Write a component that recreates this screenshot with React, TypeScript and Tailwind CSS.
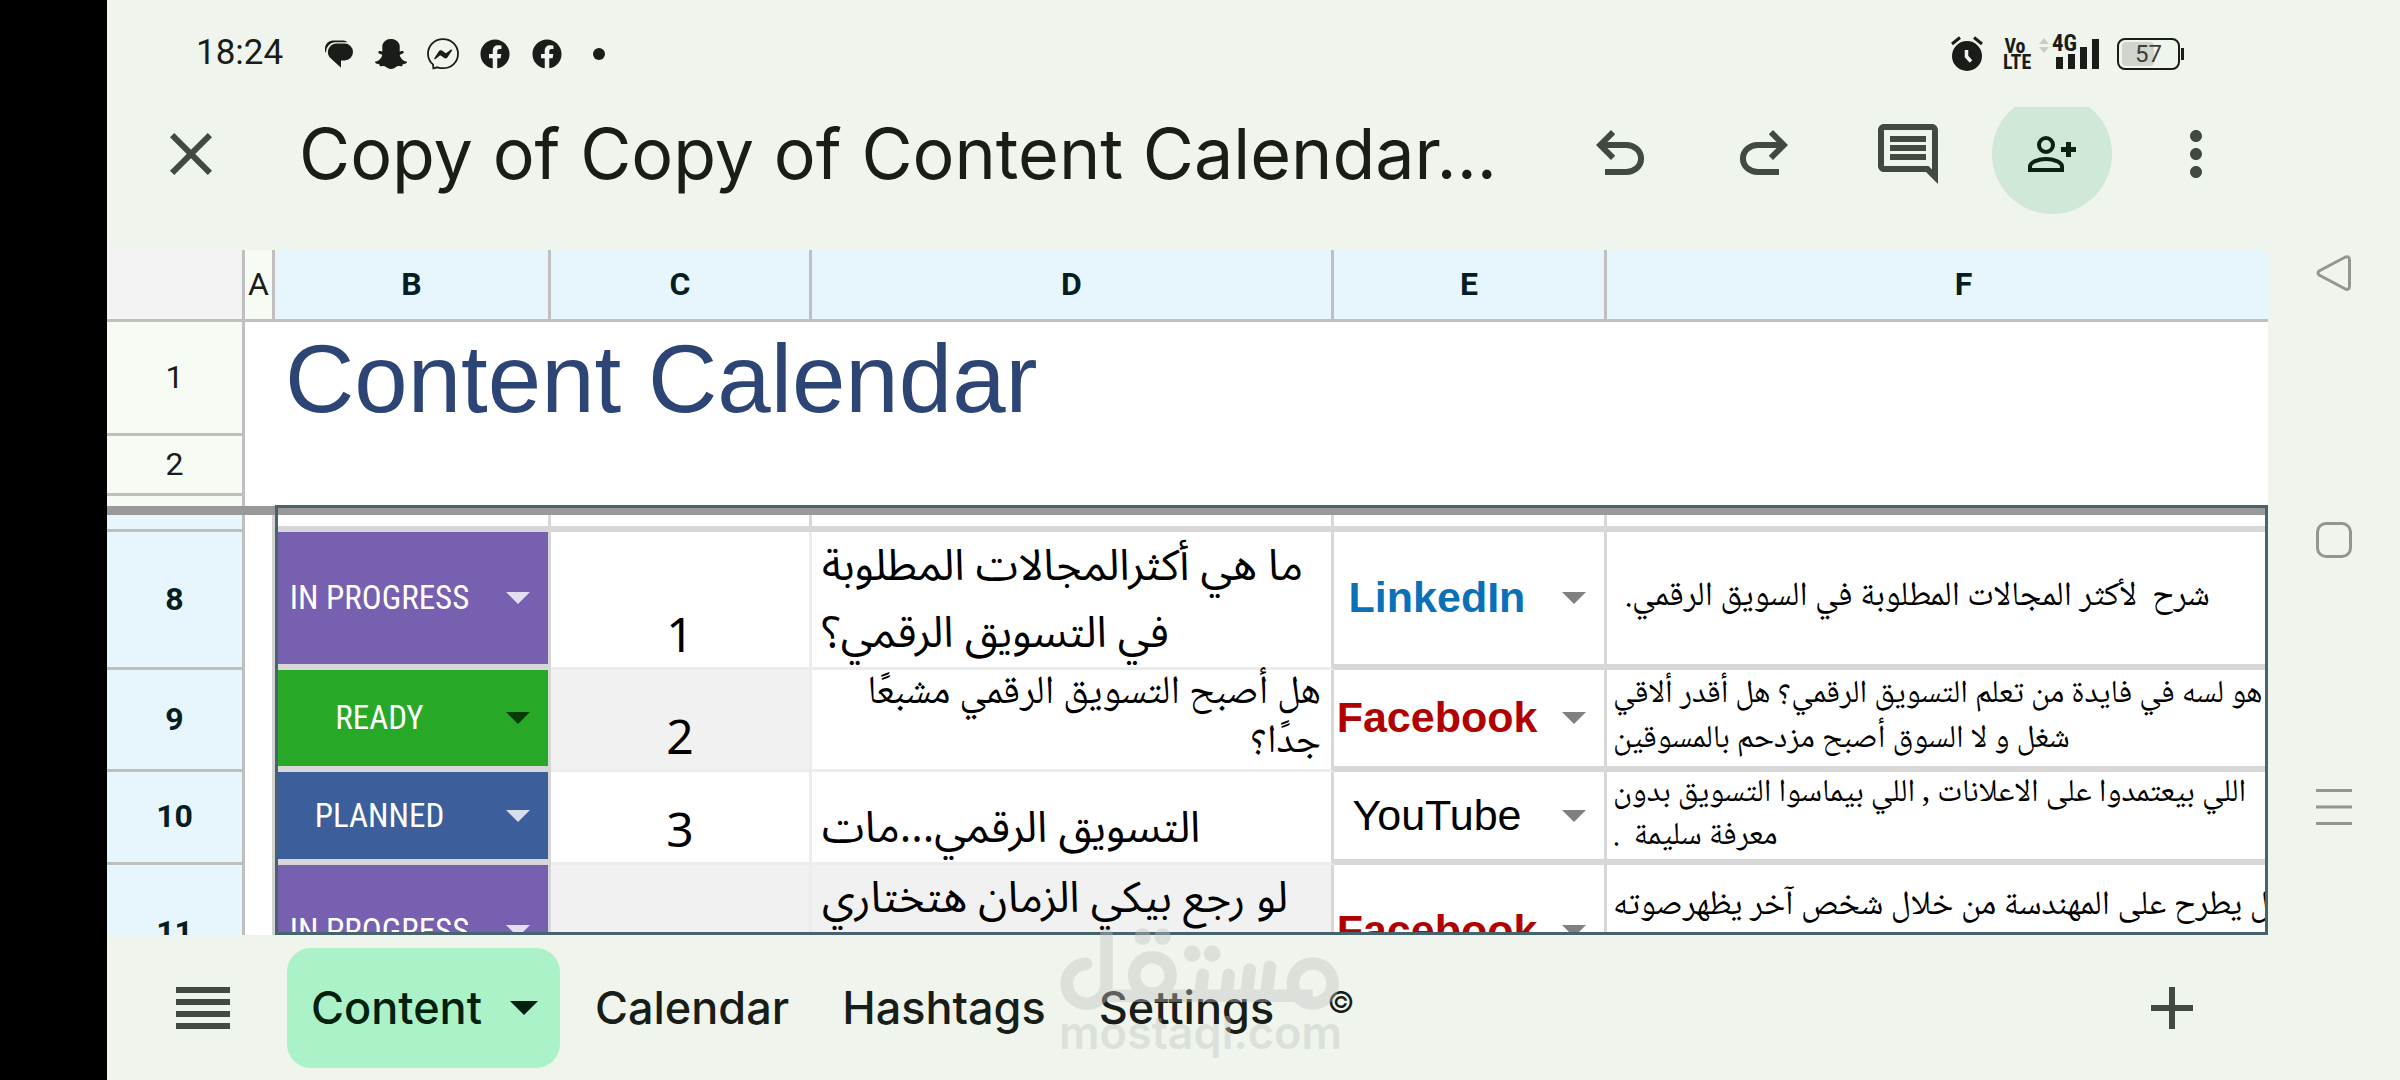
import { FaFacebook, FaSnapchatGhost } from "react-icons/fa";
import { MdClose, MdMoreVert } from "react-icons/md";

type Row = {
  n: number;
  height: string;
  status: string;
  statusBg: string;
  arrow: string;
  count: string;
  countBg: string;
  title: string[];
  titleCell: string;
  titleText: string;
  platform: string;
  platformText: string;
  notes: string[];
  notesCell: string;
};

const TITLE_SANS =
  "font-['Noto_Sans_Arabic','Noto_Sans','DejaVu_Sans',sans-serif] text-[43px] leading-[67px]";
const TITLE_NASKH =
  "font-['Noto_Naskh_Arabic','DejaVu_Sans',sans-serif] text-[40px] leading-[49px]";

const rows: Row[] = [
  {
    n: 8,
    height: "h-[138px]",
    status: "IN PROGRESS",
    statusBg: "bg-[#7860b1]",
    arrow: "text-[#e4dff0]",
    count: "1",
    countBg: "bg-white",
    title: ["ما هي أكثرالمجالات المطلوبة", "في التسويق الرقمي؟"],
    titleCell: "items-start justify-end bg-white",
    titleText: TITLE_SANS,
    platform: "LinkedIn",
    platformText: "font-bold text-[#0a70b8]",
    notes: ["شرح  لأكثر المجالات المطلوبة في السويق الرقمي."],
    notesCell: "justify-center pl-[18px] text-[34px] leading-[45px]",
  },
  {
    n: 9,
    height: "h-[102px]",
    status: "READY",
    statusBg: "bg-[#27a827]",
    arrow: "text-[#063a08]",
    count: "2",
    countBg: "bg-[#f1f1f1]",
    title: ["هل أصبح التسويق الرقمي مشبعًا", "جدًا؟"],
    titleCell: "items-end justify-start bg-white",
    titleText: TITLE_NASKH,
    platform: "Facebook",
    platformText: "font-bold text-[#b10202]",
    notes: [
      "هو لسه في فايدة من تعلم التسويق الرقمي؟ هل أقدر ألاقي",
      "شغل و لا السوق أصبح مزدحم بالمسوقين",
    ],
    notesCell: "justify-center pl-1.5 text-[32px] leading-[45px]",
  },
  {
    n: 10,
    height: "h-[93px]",
    status: "PLANNED",
    statusBg: "bg-[#3c5f9b]",
    arrow: "text-[#d8dfeb]",
    count: "3",
    countBg: "bg-white",
    title: ["التسويق الرقمي...مات"],
    titleCell: "items-start justify-end bg-white",
    titleText: TITLE_SANS,
    platform: "YouTube",
    platformText: "text-black",
    notes: [
      "اللي بيعتمدوا على الاعلانات , اللي بيماسوا التسويق بدون",
      "معرفة سليمة  .",
    ],
    notesCell: "justify-center pl-1.5 text-[32px] leading-[43px]",
  },
  {
    n: 11,
    height: "h-[138px]",
    status: "IN PROGRESS",
    statusBg: "bg-[#7860b1]",
    arrow: "text-[#e4dff0]",
    count: "",
    countBg: "bg-[#f1f1f1]",
    title: ["لو رجع بيكي الزمان هتختاري"],
    titleCell: "items-start justify-start bg-[#f1f1f1]",
    titleText: TITLE_SANS,
    platform: "Facebook",
    platformText: "font-bold text-[#b10202]",
    notes: ["ل يطرح على المهندسة من خلال شخص آخر يظهرصوته"],
    notesCell: "justify-start pt-5 pl-1.5 text-[34px] leading-[45px]",
  },
];

const ROW_HEAD = "border-r-[3px] border-b-[3px] border-[#bfbfbf] p-0 pb-0.5 text-center";
const HEAD = `h-[72px] ${ROW_HEAD}`;

function Arrow({ className }: { className: string }) {
  return (
    <svg viewBox="0 0 24 12" className={className} aria-hidden="true">
      <path d="M0 0H24L12 12Z" fill="currentColor" />
    </svg>
  );
}

function ChatIcon() {
  return (
    <svg viewBox="0 0 32 32" className="size-8" aria-hidden="true">
      <path
        d="M13 5.500h8.500a8.400 8.400 0 0 1 0 17H18v7.300L6.600 19.200A8.600 8.600 0 0 1 13 5.500Z"
        fill="#191c18"
      />
      <path
        d="M2 15V10.800A8 8 0 0 1 9.500 2.500H20a6 6 0 0 1 4.500 1.700H12A9.500 9.500 0 0 0 3.200 13Z"
        fill="#191c18"
      />
    </svg>
  );
}

function MessengerIcon() {
  return (
    <svg viewBox="0 0 32 32" className="size-8" fill="none" aria-hidden="true">
      <path
        d="M16 1.200C7.500 1.200 1 7.400 1 15.700c0 4.500 1.900 8.100 5 10.700l.4 4 4.200-1.100c1.700.6 3.500.9 5.400.9 8.500 0 15-6.200 15-14.500S24.500 1.200 16 1.200Z"
        stroke="#191c18"
        strokeWidth="1.800"
      />
      <path
        d="M7.300 20.300 11.800 13.200c.7-1.100 2.100-1.400 3.200-.6l3.400 2.500c.3.200.6.200.9 0l4.700-3.500c.6-.5 1.400.3 1 .9l-4.600 7c-.7 1.100-2.200 1.400-3.200.6l-3.400-2.500c-.3-.2-.6-.2-.9 0L8.300 21.200c-.7.4-1.400-.2-1-.9Z"
        fill="#191c18"
      />
    </svg>
  );
}

function StatusBar() {
  return (
    <div className="flex h-[107px] shrink-0 items-center justify-between pr-[84px] pl-[89px] text-[#191c18]">
      <div className="flex items-center">
        <time className="w-[127px] font-['Roboto',sans-serif] text-[35px]">18:24</time>
        <div className="flex items-center gap-5">
          <ChatIcon />
          <FaSnapchatGhost className="size-8" />
          <MessengerIcon />
          <FaFacebook className="size-8 p-px" />
          <FaFacebook className="size-8 p-px" />
          <span className="ml-2.5 size-3 rounded-full bg-[#191c18]" />
        </div>
      </div>
      <div className="flex items-center">
        <svg viewBox="0 0 32 36" className="mr-5 h-9 w-8" fill="none" aria-hidden="true">
          <circle cx="16" cy="20" r="15" fill="#191c18" />
          <path d="M1 8 9 1.500M31 8l-8-6.500" stroke="#191c18" strokeWidth="3" />
          <path d="M15.500 14v6.500l4.500 5" stroke="#eff5ed" strokeWidth="3.500" />
        </svg>
        <div className="mr-3 w-6 text-center font-['Roboto_Condensed','Liberation_Sans',sans-serif] text-[20px] leading-4 font-bold">
          <div>Vo</div>
          <div>LTE</div>
        </div>
        <div className="relative mr-4 h-8 w-[62px]">
          <svg viewBox="0 0 62 32" className="h-8 w-[62px]" aria-hidden="true">
            <path d="M0 6 5 0l5 6ZM0 9h10l-5 6Z" fill="#c8cdc6" />
            <path d="M17 19h7v12h-7ZM29 16h7v15h-7ZM41 9h7v22h-7ZM53 1h7v30h-7Z" fill="#191c18" />
          </svg>
          <span className="absolute -top-1 left-[13px] font-['Roboto_Condensed','Liberation_Sans',sans-serif] text-[23px] leading-5 font-bold">
            4G
          </span>
        </div>
        <div className="flex items-center gap-px">
          <div className="relative flex h-8 w-[63px] items-center justify-center rounded-lg border-2 border-[#191c18]">
            <span className="absolute top-0.5 left-[3px] h-6 w-8 rounded-sm bg-[#cfd4cd]" />
            <span className="relative font-['Roboto',sans-serif] text-2xl leading-6 text-[#3c403b]">57</span>
          </div>
          <span className="h-3 w-[3px] bg-[#191c18]" />
        </div>
      </div>
    </div>
  );
}

function TopBar() {
  return (
    <header className="flex h-[143px] shrink-0 items-center overflow-hidden pr-9 pb-[49px] pl-12 text-[#424940]">
      <button aria-label="Close" className="shrink-0">
        <MdClose className="size-[72px]" />
      </button>
      <h1 className="min-w-0 flex-1 overflow-hidden pl-[72px] font-['Inter',sans-serif] text-[70px] leading-[94px] whitespace-nowrap text-[#191d18]">
        Copy of Copy of Content Calendar...
      </h1>
      <div className="flex shrink-0 items-center gap-[72px]">
        <button aria-label="Undo">
          <svg viewBox="0 -960 960 960" className="size-[72px]" fill="currentColor">
            <path d="M280-200v-80h284q63 0 109.500-40T720-420q0-60-46.500-100T564-560H312l104 104-56 56-200-200 200-200 56 56-104 104h252q97 0 167 63t70 157q0 94-70 157t-167 63H280Z" />
          </svg>
        </button>
        <button aria-label="Redo">
          <svg viewBox="0 -960 960 960" className="size-[72px]" fill="currentColor">
            <path d="M396-200q-97 0-167-63t-70-157q0-94 70-157t167-63h252L544-744l56-56 200 200-200 200-56-56 104-104H396q-63 0-109.500 40T240-420q0 60 46.500 100T396-280h284v80H396Z" />
          </svg>
        </button>
        <button aria-label="Comments" className="-mr-6">
          <svg viewBox="0 0 24 24" className="size-[72px]" fill="currentColor">
            <path d="M21.990 4c0-1.100-.89-2-1.990-2H4c-1.100 0-2 .9-2 2v12c0 1.100.9 2 2 2h14l4 4-.01-18zM20 4v13.170L18.830 16H4V4h16zM6 12h12v2H6zm0-3h12v2H6zm0-3h12v2H6z" />
          </svg>
        </button>
        <button
          aria-label="Share"
          className="-mr-6 flex size-[120px] items-center justify-center rounded-full bg-[#d0e8d8] text-[#0b2113]"
        >
          <svg viewBox="0 0 48 36" className="h-9 w-12" fill="none" stroke="currentColor" strokeWidth="4">
            <circle cx="18" cy="9" r="7" />
            <path d="M2 34v-3.500C2 26 10.500 23 18 23s16 3 16 7.500V34Z" />
            <path d="M40.500 6v15M33 13.500h15" strokeWidth="5" />
          </svg>
        </button>
        <button aria-label="More options">
          <MdMoreVert className="size-[72px]" />
        </button>
      </div>
    </header>
  );
}

function Dropdown({
  label,
  value,
  options,
  text,
  arrow,
}: {
  label: string;
  value: string;
  options: string[];
  text: string;
  arrow: string;
}) {
  return (
    <div className="relative flex h-full items-center">
      <select
        aria-label={label}
        defaultValue={value}
        className={`h-full w-full appearance-none bg-transparent pr-16 text-center whitespace-nowrap ${text}`}
      >
        {options.map((o) => (
          <option key={o} value={o}>
            {o}
          </option>
        ))}
      </select>
      <Arrow className={`pointer-events-none absolute right-[18px] h-3 w-6 ${arrow}`} />
    </div>
  );
}

function Sheet() {
  return (
    <main className="relative min-h-0 flex-1 overflow-hidden bg-white">
      <table className="w-[2216px] table-fixed border-separate border-spacing-0 font-['Roboto',sans-serif] text-[32px] leading-9 text-[#191c18]">
        <colgroup>
          <col className="w-[138px]" />
          <col className="w-[30px]" />
          <col className="w-[276px]" />
          <col className="w-[261px]" />
          <col className="w-[522px]" />
          <col className="w-[273px]" />
          <col className="w-[716px]" />
        </colgroup>
        <thead>
          <tr>
            <td className={`${HEAD} bg-[#f3f3f3]`} />
            <th className={`${HEAD} bg-[#f6fbf4] font-normal`}>A</th>
            {["B", "C", "D", "E", "F"].map((c) => (
              <th key={c} className={`${HEAD} bg-[#e7f6fc] font-bold text-[#041e23]`}>
                {c}
              </th>
            ))}
          </tr>
        </thead>
        <tbody>
          <tr className="h-[114px]">
            <th className={`${ROW_HEAD} bg-[#f6fbf4] font-normal`}>1</th>
            <td
              colSpan={6}
              className="p-0 pl-10 font-['Liberation_Sans',sans-serif] text-8xl text-[#2d4575]"
            >
              Content Calendar
            </td>
          </tr>
          <tr className="h-[60px]">
            <th className={`${ROW_HEAD} bg-[#f6fbf4] font-normal`}>2</th>
            <td colSpan={6} className="p-0" />
          </tr>
          <tr className="h-2.5">
            <td className="border-r-[3px] border-[#bfbfbf] bg-[#f6fbf4] p-0" />
            <td colSpan={6} className="p-0" />
          </tr>
          <tr className="h-[9px]">
            <td colSpan={7} className="bg-[#999999] p-0" />
          </tr>
          <tr className="h-[17px]">
            <td className={`${ROW_HEAD} bg-[#e7f6fc]`} />
            <td className="border-r-[3px] border-[#d3d3d3] p-0" />
            {[0, 1, 2, 3, 4].map((c) => (
              <td key={c} className="border-r-[3px] border-b-[6px] border-[#d7d7d7] p-0" />
            ))}
          </tr>
          {rows.map((r) => (
            <tr key={r.n} className={r.height}>
              <th className={`${ROW_HEAD} bg-[#e7f6fc] font-bold text-[#041e23]`}>{r.n}</th>
              <td className="border-r-[3px] border-[#d3d3d3] p-0" />
              <td className={`h-px border-r-[3px] border-b-[6px] border-[#d7d7d7] p-0 ${r.statusBg} bg-clip-padding`}>
                <Dropdown
                  label={`Status, row ${r.n}`}
                  value={r.status}
                  options={["IN PROGRESS", "READY", "PLANNED"]}
                  text="font-['Roboto_Condensed','Liberation_Sans',sans-serif] text-[33px] text-white"
                  arrow={r.arrow}
                />
              </td>
              <td
                className={`border-r-[3px] border-b-[3px] border-[#ececec] p-0 text-center align-bottom font-['Noto_Sans',sans-serif] text-5xl leading-[66px] text-black ${r.countBg}`}
              >
                {r.count}
              </td>
              <td className="h-px border-r-[3px] border-b-[3px] border-r-[#d7d7d7] border-b-[#ececec] p-0 text-black">
                <div className={`flex h-full flex-col px-2.5 whitespace-nowrap ${r.titleCell} ${r.titleText}`}>
                  {r.title.map((t) => (
                    <span key={t} dir="rtl">
                      {t}
                    </span>
                  ))}
                </div>
              </td>
              <td className="h-px border-r-[3px] border-b-[6px] border-[#d7d7d7] p-0">
                <Dropdown
                  label={`Platform, row ${r.n}`}
                  value={r.platform}
                  options={["LinkedIn", "Facebook", "YouTube"]}
                  text={`font-['Liberation_Sans',sans-serif] text-[43px] pb-0.5 ${r.platformText}`}
                  arrow="text-[#808080]"
                />
              </td>
              <td className="h-px border-r-[3px] border-b-[6px] border-[#d7d7d7] p-0 text-black">
                <div
                  className={`flex h-full flex-col items-start font-['Noto_Naskh_Arabic','DejaVu_Sans',sans-serif] whitespace-pre ${r.notesCell}`}
                >
                  {r.notes.map((t) => (
                    <span key={t} dir="rtl">
                      {t}
                    </span>
                  ))}
                </div>
              </td>
            </tr>
          ))}
        </tbody>
      </table>
      <div className="pointer-events-none absolute top-[255px] right-0 bottom-0 left-[168px] border-3 border-[#47636b]" />
    </main>
  );
}

function Watermark() {
  return (
    <div className="pointer-events-none absolute -top-[7px] left-[952px] flex flex-col text-[#c2c2c2] opacity-40">
      <svg
        viewBox="57 24 844 250"
        className="h-[83px] w-[281px]"
        fill="none"
        stroke="currentColor"
        strokeWidth="38"
        strokeLinecap="round"
        role="img"
        aria-label="مستقل"
      >
        <path d="M137 132A60 60 0 1 0 199 192V45" />
        <circle cx="337" cy="167" r="55" />
        <path d="M199 228H820" strokeLinecap="butt" />
        <path d="M489 165 482 225M567 165 560 225M630 150 620 225M691 141 680 225" />
        <circle cx="820" cy="191" r="60" />
        <g fill="currentColor" stroke="none">
          <circle cx="308" cy="50" r="25" />
          <circle cx="368" cy="50" r="25" />
          <circle cx="457" cy="101" r="25" />
          <circle cx="517" cy="101" r="25" />
        </g>
      </svg>
      <span className="font-['Inter',sans-serif] text-[45px] leading-[44px] font-semibold">mostaql.com</span>
    </div>
  );
}

function BottomBar() {
  return (
    <footer className="relative flex h-[145px] shrink-0 items-center pr-[75px] pl-[69px] text-[#424940]">
      <button aria-label="All sheets">
        <svg viewBox="0 0 54 42" className="h-[42px] w-[54px]" fill="currentColor">
          <path d="M0 0h54v6H0zM0 12h54v6H0zM0 24h54v6H0zM0 36h54v6H0z" />
        </svg>
      </button>
      <nav
        aria-label="Sheets"
        className="ml-[57px] flex items-center gap-[53px] font-['Inter',sans-serif] text-[45px] font-medium text-[#191d18]"
      >
        <button className="-mr-[18px] flex h-[120px] items-center gap-7 rounded-3xl bg-[#acf2c8] pr-[22px] pl-6 text-[#00210f]">
          Content
          <Arrow className="h-3.5 w-7" />
        </button>
        <button>Calendar</button>
        <button>Hashtags</button>
        <button>Settings</button>
        <button className="pb-3 text-[30px] leading-8 font-normal">©</button>
      </nav>
      <button aria-label="Add sheet" className="ml-auto">
        <svg viewBox="0 0 42 42" className="size-[42px]" fill="currentColor">
          <path d="M18 0h6v18h18v6H24v18h-6V24H0v-6h18z" />
        </svg>
      </button>
      <Watermark />
    </footer>
  );
}

function SystemNav() {
  return (
    <nav
      aria-label="System"
      className="flex w-[132px] shrink-0 flex-col items-center justify-center gap-[231px] text-[#91968f]"
    >
      <button aria-label="Back">
        <svg viewBox="0 0 36 36" className="size-9" fill="none" stroke="currentColor" strokeWidth="3" strokeLinejoin="round">
          <path d="M3 16 29 2.200Q33.500 0.500 33.500 5V31Q33.500 35.500 29 33.800L3 20Q1 18 3 16Z" />
        </svg>
      </button>
      <button aria-label="Home" className="size-9 rounded-[10px] border-3 border-[#91968f]" />
      <button aria-label="Recent apps">
        <svg viewBox="0 0 36 36" className="size-9" fill="currentColor">
          <path d="M0 0h36v3H0zM0 16.500h36v3H0zM0 33h36v3H0z" />
        </svg>
      </button>
    </nav>
  );
}

export default function App() {
  return (
    <div className="flex h-screen overflow-hidden bg-[#eff5ed]">
      <div className="w-[107px] shrink-0 bg-black" />
      <div className="flex min-w-0 flex-1 flex-col">
        <StatusBar />
        <TopBar />
        <Sheet />
        <BottomBar />
      </div>
      <SystemNav />
    </div>
  );
}
